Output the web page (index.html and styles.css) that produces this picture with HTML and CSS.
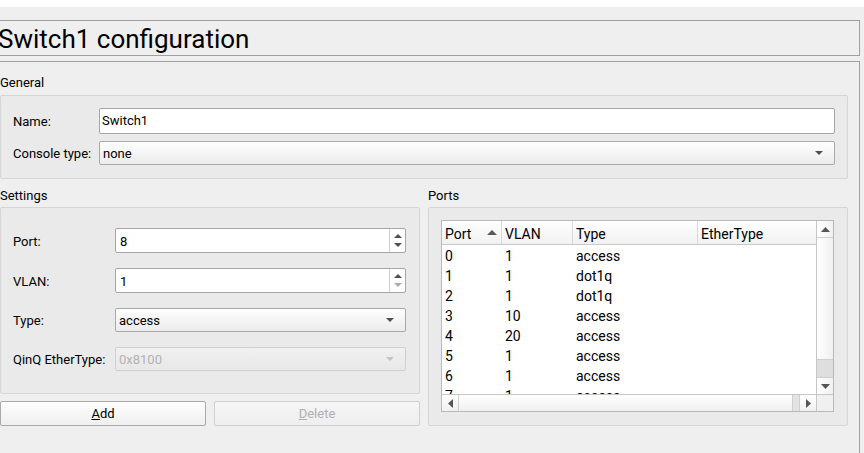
FILE: index.html
```html
<!DOCTYPE html>
<html>
<head>
<meta charset="utf-8">
<title>Switch1 configuration</title>
<link rel="stylesheet" href="styles.css">
</head>
<body>
<div class="topbar"></div>
<div class="page">
  <div class="title-frame"><h1 class="title">Switch1 configuration</h1></div>
  <div class="main-frame">
    <div class="group-title">General</div>
    <div class="group form general">
      <div class="label">Name:</div>
      <div class="lineedit">Switch1</div>
      <div class="label">Console type:</div>
      <div class="combo"><span class="combo-text">none</span><svg class="arrow" width="8" height="4" viewBox="0 0 8 4"><path d="M0 0H8L4 4Z"/></svg></div>
    </div>
    <div class="columns">
      <div class="col">
        <div class="group-title">Settings</div>
        <div class="group form settings">
          <div class="label">Port:</div>
          <div class="spin"><span class="spin-text">8</span><div class="spin-btns"><svg class="arrow" width="8" height="4" viewBox="0 0 8 4"><path d="M0 4L4 0L8 4Z"/></svg><svg class="arrow" width="8" height="4" viewBox="0 0 8 4"><path d="M0 0H8L4 4Z"/></svg></div></div>
          <div class="label">VLAN:</div>
          <div class="spin"><span class="spin-text">1</span><div class="spin-btns"><svg class="arrow" width="8" height="4" viewBox="0 0 8 4"><path d="M0 4L4 0L8 4Z"/></svg><svg class="arrow arrow-off" width="8" height="4" viewBox="0 0 8 4"><path d="M0 0H8L4 4Z"/></svg></div></div>
          <div class="label">Type:</div>
          <div class="combo small"><span class="combo-text">access</span><svg class="arrow" width="8" height="4" viewBox="0 0 8 4"><path d="M0 0H8L4 4Z"/></svg></div>
          <div class="label">QinQ EtherType:</div>
          <div class="combo small disabled"><span class="combo-text">0x8100</span><svg class="arrow" width="8" height="4" viewBox="0 0 8 4"><path d="M0 0H8L4 4Z"/></svg></div>
        </div>
        <div class="buttons">
          <div class="btn"><u>A</u>dd</div>
          <div class="btn disabled"><u>D</u>elete</div>
        </div>
      </div>
      <div class="col">
        <div class="group-title">Ports</div>
        <div class="group ports">
          <div class="table">
            <div class="table-main">
              <div class="thead">
                <div class="th th-sort"><span>Port</span><svg class="sort" width="10" height="5" viewBox="0 0 10 5"><path d="M0 5L5 0L10 5Z"/></svg></div>
                <div class="th">VLAN</div>
                <div class="th">Type</div>
                <div class="th th-last">EtherType</div>
              </div>
              <div class="tbody">
                <div class="tr"><div class="td">0</div><div class="td">1</div><div class="td">access</div><div class="td"></div></div>
                <div class="tr"><div class="td">1</div><div class="td">1</div><div class="td">dot1q</div><div class="td"></div></div>
                <div class="tr"><div class="td">2</div><div class="td">1</div><div class="td">dot1q</div><div class="td"></div></div>
                <div class="tr"><div class="td">3</div><div class="td">10</div><div class="td">access</div><div class="td"></div></div>
                <div class="tr"><div class="td">4</div><div class="td">20</div><div class="td">access</div><div class="td"></div></div>
                <div class="tr"><div class="td">5</div><div class="td">1</div><div class="td">access</div><div class="td"></div></div>
                <div class="tr"><div class="td">6</div><div class="td">1</div><div class="td">access</div><div class="td"></div></div>
                <div class="tr"><div class="td">7</div><div class="td">1</div><div class="td">access</div><div class="td"></div></div>
              </div>
            </div>
            <div class="vscroll">
              <div class="sb-btn sb-up"><svg class="sb-arrow" width="9" height="5" viewBox="0 0 9 5"><path d="M0 5L4.5 0L9 5Z"/></svg></div>
              <div class="sb-track"></div>
              <div class="sb-thumb-v"></div>
              <div class="sb-btn sb-down"><svg class="sb-arrow" width="9" height="5" viewBox="0 0 9 5"><path d="M0 0H9L4.5 5Z"/></svg></div>
            </div>
            <div class="hscroll">
              <div class="sb-btn sb-left"><svg class="sb-arrow" width="5" height="9" viewBox="0 0 5 9"><path d="M5 0V9L0 4.5Z"/></svg></div>
              <div class="sb-thumb-h"></div>
              <div class="sb-track-h"></div>
              <div class="sb-btn sb-right"><svg class="sb-arrow" width="5" height="9" viewBox="0 0 5 9"><path d="M0 0V9L5 4.5Z"/></svg></div>
            </div>
            <div class="corner"></div>
          </div>
        </div>
      </div>
    </div>
  </div>
</div>
</body>
</html>
```
FILE: styles.css
```css
* { box-sizing: border-box; }

html, body {
  margin: 0;
  width: 864px;
  height: 453px;
  overflow: hidden;
}

body {
  background: #efefef;
  font-family: Roboto, "Liberation Sans", sans-serif;
  font-size: 13px;
  color: #000;
}

.topbar {
  height: 7px;
  background: #fff;
}

.page {
  padding-top: 13px;
}

.title-frame {
  margin-left: -6px;
  width: 866px;
  height: 36px;
  border: 1px solid #a0a0a0;
}

.title {
  margin: 0;
  padding: 2px 0 0 3px;
  font-size: 26px;
  font-weight: 400;
  line-height: 32px;
  white-space: nowrap;
}

.main-frame {
  margin-top: 5px;
  margin-left: -3px;
  width: 863px;
  height: 392px;
  border: 1px solid #a0a0a0;
  border-bottom: none;
  padding: 13px 11px 0 2px;
}

.group-title {
  height: 16px;
  line-height: 16px;
  margin-bottom: 4px;
  white-space: nowrap;
}

.group {
  background: #eaeaea;
  border: 1px solid #d6d6d6;
  border-radius: 2px;
}

.form {
  display: grid;
  align-items: center;
}

.general {
  grid-template-columns: 86px 1fr;
  row-gap: 7px;
  padding: 12px 12px 13px 12px;
}

.settings {
  grid-template-columns: 102px 1fr;
  row-gap: 15px;
  padding: 20px 13px 22px 12px;
}

.label {
  line-height: 16px;
  padding-top: 2px;
  white-space: nowrap;
}

.lineedit {
  height: 26px;
  line-height: 24px;
  padding-left: 2px;
  background: #fff;
  border: 1px solid #a6a6a6;
  border-radius: 2px;
}

.combo {
  display: flex;
  align-items: center;
  height: 24px;
  padding: 0 11px 0 3px;
  background: linear-gradient(#fefefe, #ececec);
  border: 1px solid #a9a9a9;
  border-radius: 2px;
}

.combo-text {
  flex: 1;
  line-height: 22px;
  padding-top: 1px;
}

.arrow {
  display: block;
  fill: #4f4f4f;
}

.combo.disabled {
  background: linear-gradient(#f0f0f0, #e8e8e8);
  border-color: #d0d0d0;
  color: #b3b3b3;
}

.combo.disabled .arrow {
  fill: #c4c4c4;
}

.spin {
  display: flex;
  height: 25px;
  background: #fff;
  border: 1px solid #a6a6a6;
  border-radius: 2px;
}

.spin-text {
  flex: 1;
  line-height: 23px;
  padding: 1px 0 0 4px;
}

.spin-btns {
  width: 16px;
  border-left: 1px solid #cfcfcf;
  display: flex;
  flex-direction: column;
  align-items: center;
  justify-content: center;
  gap: 5px;
}

.arrow-off {
  fill: #ababab;
}

.columns {
  display: flex;
  gap: 8px;
  margin-top: 9px;
}

.columns .group-title {
  margin-bottom: 3px;
}

.col {
  width: 420px;
}

.buttons {
  display: flex;
  gap: 8px;
  margin-top: 7px;
}

.btn {
  flex: 1;
  height: 25px;
  padding-top: 1px;
  line-height: 22px;
  text-align: center;
  background: linear-gradient(#fefefe, #efefef);
  border: 1px solid #a9a9a9;
  border-radius: 2px;
}

.btn.disabled {
  border-color: #d0d0d0;
  color: #b0b0b0;
  background: linear-gradient(#f6f6f6, #eeeeee);
}

.ports {
  height: 219px;
  padding: 12px 13px 13px 12px;
}

.table {
  display: grid;
  grid-template-columns: 374px 17px;
  grid-template-rows: 173px 17px;
  width: 393px;
  height: 192px;
  border: 1px solid #b9b9b9;
  background: #fff;
  font-size: 14px;
}

.table-main {
  overflow: hidden;
  display: flex;
  flex-direction: column;
}

.thead,
.tr {
  display: grid;
  grid-template-columns: 60px 71px 125px 118px;
}

.thead {
  height: 24px;
  flex: none;
  border-bottom: 1px solid #c9c9c9;
  background: linear-gradient(#ffffff, #f1f1f1);
}

.th {
  padding: 3px 0 0 3px;
  line-height: 20px;
  border-right: 1px solid #d8d8d8;
  white-space: nowrap;
}

.th-last {
  border-right: none;
}

.th-sort {
  display: flex;
  align-items: center;
  justify-content: space-between;
  padding-right: 4px;
}

.sort {
  display: block;
  fill: #5a5a5a;
  margin-top: -4px;
}

.tbody {
  flex: 1;
  overflow: hidden;
  padding-top: 1px;
}

.tr {
  height: 20px;
  line-height: 20px;
}

.td {
  padding-left: 3px;
  white-space: nowrap;
}

.vscroll {
  border-left: 1px solid #c6c6c6;
  display: flex;
  flex-direction: column;
  background: linear-gradient(90deg, #ffffff, #f0f0f0);
}

.sb-btn {
  display: flex;
  align-items: center;
  justify-content: center;
  background: linear-gradient(90deg, #ffffff, #f0f0f0);
}

.sb-arrow {
  display: block;
  fill: #555;
}

.sb-up {
  height: 17px;
  border-bottom: 1px solid #d0d0d0;
}

.sb-track {
  flex: 1;
}

.sb-thumb-v {
  height: 18px;
  background: #dedede;
  border-top: 1px solid #cfcfcf;
}

.sb-down {
  height: 17px;
  border-top: 1px solid #cfcfcf;
}

.hscroll {
  border-top: 1px solid #c6c6c6;
  display: flex;
  background: linear-gradient(#ffffff, #f0f0f0);
}

.sb-left {
  width: 17px;
  border-right: 1px solid #d0d0d0;
  background: linear-gradient(#ffffff, #f0f0f0);
}

.sb-thumb-h {
  flex: 1;
  border-right: 1px solid #cfcfcf;
  background: linear-gradient(#ffffff, #f0f0f0);
}

.sb-track-h {
  width: 6px;
  background: #e3e3e3;
}

.sb-right {
  width: 17px;
  border-left: 1px solid #cfcfcf;
  background: linear-gradient(#ffffff, #f0f0f0);
}

.corner {
  border-left: 1px solid #c6c6c6;
  border-top: 1px solid #c6c6c6;
  background: #f0f0f0;
}
```
